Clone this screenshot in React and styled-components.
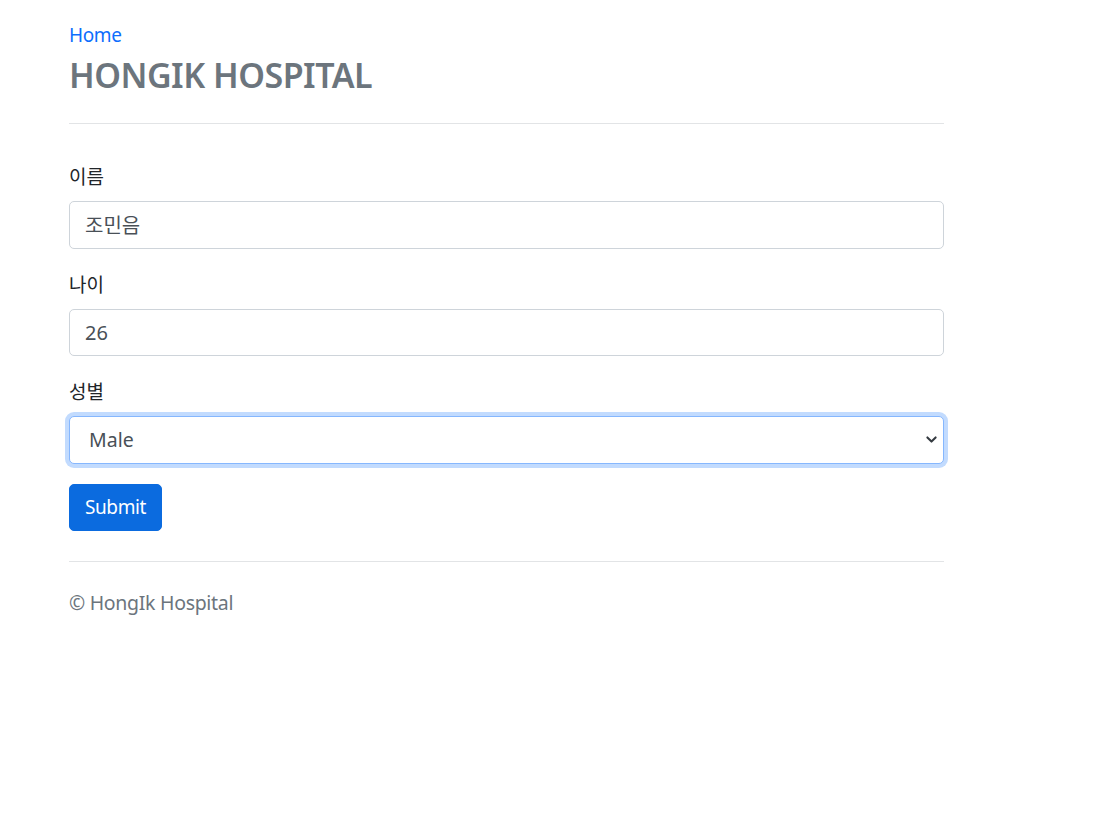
import React from "react";
import styled, { createGlobalStyle } from "styled-components";

const GlobalStyle = createGlobalStyle`
  html, body { margin: 0; padding: 0; background: #fff; }
  body {
    font-family: "Noto Sans", "Noto Sans CJK KR", sans-serif;
    font-size: 19.5px;
    letter-spacing: -0.3px;
    line-height: 1.5;
    color: #212529;
  }
  * { box-sizing: border-box; }
`;

const Page = styled.div`
  width: 875px;
  margin-left: 69px;
  padding-top: 20px;
`;

const Header = styled.header`
  display: flex;
  flex-direction: column;
  align-items: flex-start;
  border-bottom: 1px solid #e2e4e6;
  padding-bottom: 26px;
`;

const HomeLink = styled.a`
  color: #0d6efd;
  text-decoration: none;
  font-size: 19px;
  letter-spacing: -0.4px;
  line-height: 30px;
`;

const Title = styled.h2`
  margin: 3px 0 0;
  font-size: 34px;
  font-weight: 600;
  line-height: 44px;
  color: #6c757d;
  letter-spacing: -0.5px;
`;

const Form = styled.form`
  margin-top: 37px;
  display: flex;
  flex-direction: column;
  align-items: stretch;
`;

const Group = styled.div`
  display: flex;
  flex-direction: column;
  margin-bottom: 20px;
`;

const Label = styled.label`
  display: block;
  line-height: 30px;
  margin-bottom: 10px;
  color: #212529;
  font-family: "Noto Sans CJK KR", "Noto Sans", sans-serif;
  font-size: 19px;
  letter-spacing: 0;
`;

const Input = styled.input`
  display: block;
  width: 100%;
  height: 47.5px;
  padding: 0 15px;
  font: inherit;
  font-family: "Noto Sans", "Noto Sans CJK KR", sans-serif;
  font-size: 20px;
  letter-spacing: 0;
  color: #495057;
  background: #fff;
  border: 1px solid #ced4da;
  border-radius: 5px;
  outline: none;
`;

const Select = styled.select`
  display: block;
  width: 100%;
  height: 47.5px;
  padding: 0 45px 0 19px;
  font: inherit;
  font-size: 19.5px;
  color: #495057;
  background-color: #fff;
  background-image: url("data:image/svg+xml,%3csvg xmlns='http://www.w3.org/2000/svg' viewBox='0 0 16 16'%3e%3cpath fill='none' stroke='%23343a40' stroke-linecap='round' stroke-linejoin='round' stroke-width='3' d='M2 5l6 6 6-6'/%3e%3c/svg%3e");
  background-repeat: no-repeat;
  background-position: right 4px center;
  background-size: 15px 11px;
  border: 1px solid #86b7fe;
  border-radius: 5px;
  box-shadow: 0 0 0 4px #c2dbfe;
  appearance: none;
  outline: none;
`;

const SubmitButton = styled.button`
  align-self: flex-start;
  height: 47.5px;
  padding: 0 15px;
  font: inherit;
  font-size: 19px;
  letter-spacing: -0.4px;
  color: #fff;
  background: #0b6bdf;
  border: 1px solid #0b6bdf;
  border-radius: 5px;
  cursor: pointer;
`;

const Footer = styled.footer`
  margin-top: 30px;
  border-top: 1px solid #e2e4e6;
  padding-top: 26px;
  color: #6c757d;
  line-height: 30px;
`;

export default function App() {
  return (
    <>
      <GlobalStyle />
      <Page>
        <Header>
          <HomeLink href="#">Home</HomeLink>
          <Title>HONGIK HOSPITAL</Title>
        </Header>
        <Form onSubmit={(e) => e.preventDefault()}>
          <Group>
            <Label htmlFor="name">이름</Label>
            <Input id="name" defaultValue="조민음" />
          </Group>
          <Group>
            <Label htmlFor="age">나이</Label>
            <Input id="age" defaultValue="26" />
          </Group>
          <Group>
            <Label htmlFor="gender">성별</Label>
            <Select id="gender" defaultValue="Male">
              <option value="Male">Male</option>
              <option value="Female">Female</option>
            </Select>
          </Group>
          <SubmitButton type="submit">Submit</SubmitButton>
        </Form>
        <Footer>© HongIk Hospital</Footer>
      </Page>
    </>
  );
}
